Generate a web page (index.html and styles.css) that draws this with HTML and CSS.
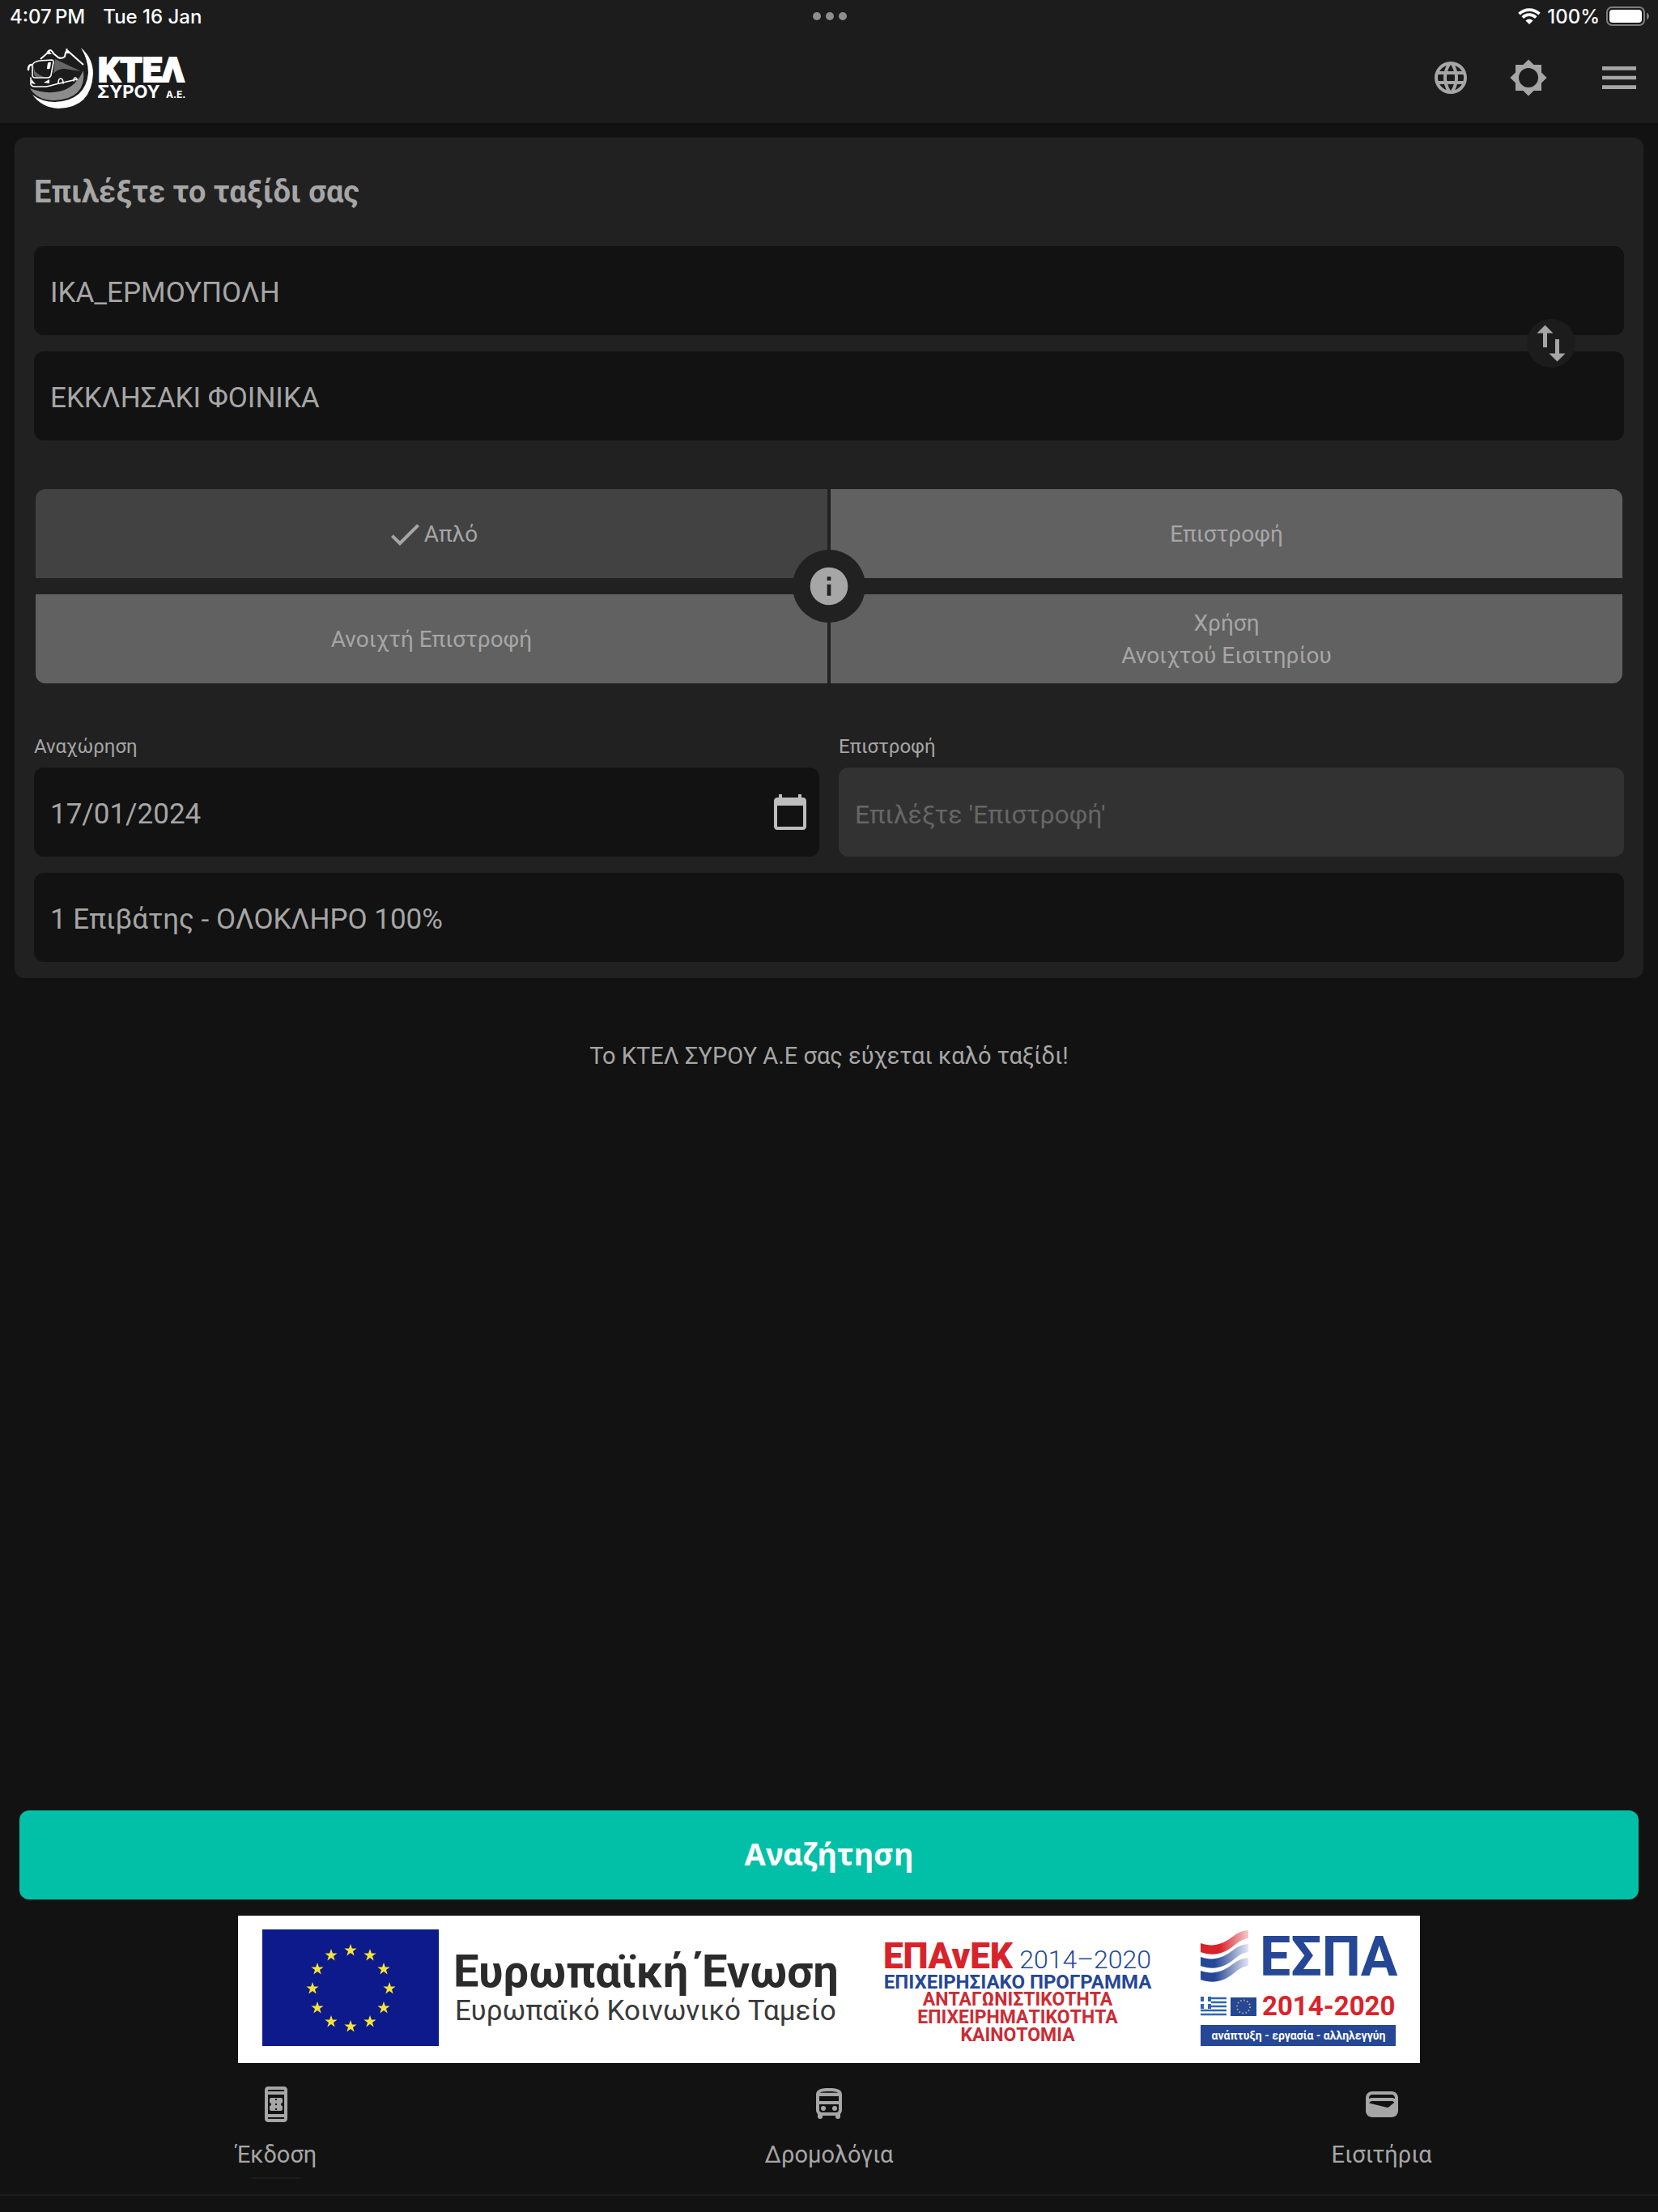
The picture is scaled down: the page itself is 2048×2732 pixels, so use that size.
FILE: index.html
```
<!DOCTYPE html>
<html lang="el">
<head>
  <meta charset="UTF-8">
  <meta name="viewport" content="width=device-width, initial-scale=1">
  <title>ΚΤΕΛ Σύρου Α.Ε.</title>
  <link rel="stylesheet" href="styles.css">
</head>
<body>

  <header class="top">
    <div class="status">
      <div class="status-left">
        <span>4:07&thinsp;PM</span>
        <span>Tue 16 Jan</span>
      </div>
      <svg class="dots" viewBox="0 0 44 12">
        <circle cx="6" cy="6" r="5"/><circle cx="22" cy="6" r="5"/><circle cx="38" cy="6" r="5"/>
      </svg>
      <div class="status-right">
        <svg class="wifi" viewBox="0 0 28 20">
          <path d="M14 20l-4.600-4.600a6.500 6.500 0 0 1 9.200 0z" fill="#fff"/>
          <path d="M5.800 11.600a11.600 11.600 0 0 1 16.400 0M1.500 7.200a17.700 17.700 0 0 1 25 0" fill="none" stroke="#fff" stroke-width="3.800"/>
        </svg>
        <span>100%</span>
        <svg class="battery" viewBox="0 0 54 24">
          <rect x="1" y="1" width="46" height="22" rx="6" fill="none" stroke="#7d7d7d" stroke-width="2"/>
          <rect x="4" y="4" width="40" height="16" rx="4" fill="#fff"/>
          <path d="M50 7.500v9c4-2 4-7 0-9z" fill="#7d7d7d"/>
        </svg>
      </div>
    </div>

    <div class="toolbar">
      <a class="logo" href="#" aria-label="ΚΤΕΛ Σύρου">
        <svg viewBox="0 0 196 76">
          <!-- churches on the hills -->
          <path d="M14 15l8-7q2-4 4-4 2 0 4 4l6 5q4 2 8-1l1-5q2-4 4-1l18 16" fill="none" stroke="#fff" stroke-width="2"/>
          <path d="M24.500 4v4M46.500 2v5" stroke="#fff" stroke-width="2"/>
          <path d="M21 9l3.500-4L28 9zM44 8l2.500-4L50 8z" fill="#fff"/>
          <!-- bus -->
          <path d="M32 15l32 15-20-3q-8-1-14 6zM5 21l2 9q5 5 11 7h-8q-4 0-4-4z" fill="#666"/>
          <g fill="none" stroke="#fff" stroke-width="1.600" stroke-linecap="round">
            <path d="M4 22q2-4 9-5l15-1q2 0 2 3l-3 16q-1 3-4 3H7q-3 0-3-4z"/>
            <path d="M3 22q-4 0-4 6" stroke-width="2.500"/>
            <path d="M2 38v8q1 3 5 3h14q5-1 12-3l26-6"/>
            <path d="M36 45q0-6 3-6t3 6M55 42q0-4 2-4t2 3"/>
          </g>
          <path d="M22 26l1-6q1-2 4-1l-1 7q-1 2-4 1zM3 40l5 6-5-1zM18 44l7-4v5z" fill="#fff"/>
          <path d="M1 51q14 6 28 5 26-1 38-27 4 35-36 37-21 0-30-15z" fill="#8c8c8c"/>
          <path d="M64 1q15 13 15 32-2 42-43 43Q16 75 4 59q12 9 28 9 38-2 41-36 0-16-9-31z" fill="#fff"/>
          <text x="85" y="43" class="logo-name">ΚΤΕΛ</text>
          <text x="84" y="63" class="logo-place">ΣΥΡΟΥ</text>
          <text x="169" y="63" class="logo-ae">Α.Ε.</text>
        </svg>
      </a>
      <div class="tools">
        <button type="button" aria-label="Γλώσσα">
          <svg class="icon" viewBox="0 0 24 24"><path d="M16.360,14C16.440,13.340 16.500,12.680 16.500,12C16.500,11.320 16.440,10.660 16.360,10H19.740C19.900,10.640 20,11.310 20,12C20,12.690 19.900,13.360 19.740,14M14.590,19.560C15.190,18.450 15.650,17.250 15.970,16H18.920C17.960,17.650 16.430,18.930 14.590,19.560M14.340,14H9.660C9.560,13.340 9.500,12.680 9.500,12C9.500,11.320 9.560,10.650 9.660,10H14.340C14.430,10.650 14.500,11.320 14.500,12C14.500,12.680 14.430,13.340 14.340,14M12,19.960C11.170,18.760 10.500,17.430 10.090,16H13.910C13.500,17.430 12.830,18.760 12,19.960M8,8H5.080C6.030,6.340 7.570,5.060 9.400,4.440C8.800,5.550 8.350,6.750 8,8M5.080,16H8C8.350,17.250 8.800,18.450 9.400,19.560C7.570,18.930 6.030,17.650 5.080,16M4.260,14C4.100,13.360 4,12.690 4,12C4,11.310 4.100,10.640 4.260,10H7.640C7.560,10.660 7.500,11.320 7.500,12C7.500,12.680 7.560,13.340 7.640,14M12,4.030C12.830,5.230 13.500,6.570 13.910,8H10.090C10.500,6.570 11.170,5.230 12,4.030M18.920,8H15.970C15.650,6.750 15.190,5.550 14.590,4.440C16.430,5.070 17.960,6.340 18.920,8M12,2C6.470,2 2,6.500 2,12A10,10 0 0,0 12,22A10,10 0 0,0 22,12A10,10 0 0,0 12,2Z"/></svg>
        </button>
        <button type="button" aria-label="Θέμα">
          <svg class="icon" viewBox="0 0 24 24"><path d="M12,18A6,6 0 0,1 6,12A6,6 0 0,1 12,6A6,6 0 0,1 18,12A6,6 0 0,1 12,18M20,15.310L23.310,12L20,8.690V4H15.310L12,0.690L8.690,4H4V8.690L0.690,12L4,15.310V20H8.690L12,23.310L15.310,20H20V15.310Z"/></svg>
        </button>
        <button type="button" class="menu" aria-label="Μενού">
          <svg class="icon-lg" viewBox="0 0 24 24"><path d="M3,6H21V8H3V6M3,11H21V13H3V11M3,16H21V18H3V16Z"/></svg>
        </button>
      </div>
    </div>
  </header>

  <main>
    <form class="card" id="searchForm">
      <h1>Επιλέξτε το ταξίδι σας</h1>

      <div class="stations">
        <input class="field" type="text" aria-label="Από" value="ΙΚΑ_ΕΡΜΟΥΠΟΛΗ">
        <input class="field" type="text" aria-label="Προς" value="ΕΚΚΛΗΣΑΚΙ ΦΟΙΝΙΚΑ">
        <button type="button" class="swap" aria-label="Αντιστροφή">
          <svg viewBox="0 0 24 24"><path d="M9,3L5,7H8V14H10V7H13M16,17V10H14V17H11L15,21L19,17H16Z"/></svg>
        </button>
      </div>

      <div class="types">
        <button type="button" class="type active" aria-pressed="true">
          <svg class="icon" viewBox="0 0 24 24"><path d="M21,7L9,19L3.500,13.500L4.910,12.090L9,16.170L19.590,5.590L21,7Z"/></svg>
          <span>Απλό</span>
        </button>
        <button type="button" class="type">Επιστροφή</button>
        <button type="button" class="type">Ανοιχτή Επιστροφή</button>
        <button type="button" class="type">Χρήση<br>Ανοιχτού Εισιτηρίου</button>
        <button type="button" class="info" aria-label="Πληροφορίες">
          <svg class="icon-lg" viewBox="0 0 24 24"><path d="M13,9H11V7H13M13,17H11V11H13M12,2A10,10 0 0,0 2,12A10,10 0 0,0 12,22A10,10 0 0,0 22,12A10,10 0 0,0 12,2Z"/></svg>
        </button>
      </div>

      <div class="dates">
        <div class="date">
          <label for="departure">Αναχώρηση</label>
          <div class="date-box">
            <input class="field" type="text" id="departure" value="17/01/2024">
            <svg class="icon calendar" viewBox="0 0 24 24"><path d="M20 3h-1V1h-2v2H7V1H5v2H4c-1.100 0-2 .9-2 2v16c0 1.100.9 2 2 2h16c1.100 0 2-.9 2-2V5c0-1.100-.9-2-2-2zm0 18H4V8h16v13z"/></svg>
          </div>
        </div>
        <div class="date">
          <label for="return">Επιστροφή</label>
          <input class="field" type="text" id="return" placeholder="Επιλέξτε 'Επιστροφή'" disabled>
        </div>
      </div>

      <input class="field" type="text" aria-label="Επιβάτες" value="1 Επιβάτης - ΟΛΟΚΛΗΡΟ 100%">
    </form>

    <p class="wish">Το ΚΤΕΛ ΣΥΡΟΥ Α.Ε σας εύχεται καλό ταξίδι!</p>
  </main>

  <footer>
    <button type="submit" form="searchForm" class="search">Αναζήτηση</button>

    <svg class="banner" viewBox="0 0 1460 182">
      <defs>
        <path id="star" d="M0-8L1.900-2.500H7.600L3 .9 4.700 6.500 0 3.100-4.700 6.500-3 .9-7.600-2.500H-1.900z"/>
        <linearGradient id="redWave"><stop offset="0.400" stop-color="#d9232b"/><stop offset="1" stop-color="#f6c9cc"/></linearGradient>
        <linearGradient id="blueWave"><stop offset="0.300" stop-color="#254796"/><stop offset="1" stop-color="#e4e6f3"/></linearGradient>
      </defs>
      <rect width="1460" height="182" fill="#fff"/>

      <rect x="30" y="17" width="218" height="144" fill="#0d1a8c"/>
      <g fill="#f7e435">
        <use href="#star" x="139" y="43"/><use href="#star" x="163" y="49"/><use href="#star" x="180" y="66"/>
        <use href="#star" x="187" y="90"/><use href="#star" x="180" y="114"/><use href="#star" x="163" y="131"/>
        <use href="#star" x="139" y="137"/><use href="#star" x="115" y="131"/><use href="#star" x="98" y="114"/>
        <use href="#star" x="92" y="90"/><use href="#star" x="98" y="66"/><use href="#star" x="115" y="49"/>
      </g>
      <text x="266" y="88" class="eu-title">Ευρωπαϊκή Ένωση</text>
      <text x="268" y="129" class="eu-sub">Ευρωπαϊκό Κοινωνικό Ταμείο</text>

      <text x="797" y="65" class="epanek">ΕΠΑνΕΚ</text>
      <text x="1128" y="65" class="epanek-year">2014–2020</text>
      <g class="epanek-lines">
        <text x="963" y="90" class="blue">ΕΠΙΧΕΙΡΗΣΙΑΚΟ ΠΡΟΓΡΑΜΜΑ</text>
        <text x="963" y="111">ΑΝΤΑΓΩΝΙΣΤΙΚΟΤΗΤΑ</text>
        <text x="963" y="133">ΕΠΙΧΕΙΡΗΜΑΤΙΚΟΤΗΤΑ</text>
        <text x="963" y="155">ΚΑΙΝΟΤΟΜΙΑ</text>
      </g>

      <!-- waves fade out to the right -->
      <path d="M1189 34c14 5 26 2 38-7 8-6 14-9 21-9v10c-8 1-13 5-19 10-13 10-25 12-40 7z" fill="url(#redWave)"/>
      <path d="M1189 51c14 5 26 2 38-7 8-6 14-9 21-9v10c-8 1-13 5-19 10-13 10-25 12-40 7z" fill="url(#blueWave)"/>
      <path d="M1189 68c14 5 26 2 38-7 8-6 14-9 21-9v10c-8 1-13 5-19 10-13 10-25 12-40 7z" fill="url(#blueWave)"/>
      <text x="1262" y="74" class="espa">ΕΣΠΑ</text>
      <text x="1265" y="123" class="espa-year">2014-2020</text>
      <g stroke="#2f64b5" stroke-width="2.500">
        <path d="M1202 102h19M1202 107h19M1202 112h19M1189 117h32M1189 122h32"/>
        <path d="M1189 103h4M1198 103h4M1189 112h4M1198 112h4" stroke-width="6"/>
      </g>
      <rect x="1226" y="101" width="32" height="23" fill="#254796"/>
      <circle cx="1242" cy="112.500" r="8" fill="none" stroke="#b9b56a" stroke-width="2" stroke-dasharray="1.500 2.690"/>
      <rect x="1189" y="135" width="241" height="26" fill="#254796"/>
      <text x="1310" y="153" class="espa-motto">ανάπτυξη - εργασία - αλληλεγγύη</text>
    </svg>

    <nav class="tabs">
      <a href="#" class="tab current">
        <svg class="icon" viewBox="0 0 24 24"><path d="M17 1H7c-1.100 0-2 .9-2 2v18c0 1.100.9 2 2 2h10c1.100 0 2-.9 2-2V3c0-1.100-.9-2-2-2zM7 4V3h10v1H7zm0 14V6h10v12H7zm0 3v-1h10v1H7zm9-10V9c0-.55-.45-1-1-1H9c-.55 0-1 .45-1 1v2c.55 0 1 .45 1 1s-.45 1-1 1v2c0 .55.45 1 1 1h6c.55 0 1-.45 1-1v-2c-.55 0-1-.45-1-1s.45-1 1-1zm-3.500 4.500h-1v-1h1v1zm0-3h-1v-1h1v1zm0-3h-1v-1h1v1z"/></svg>
        <span>Έκδοση</span>
      </a>
      <a href="#" class="tab">
        <svg class="icon" viewBox="0 0 24 24"><path fill-rule="evenodd" d="M12 2C8 2 4 2.500 4 6v9.500c0 .95.38 1.810 1 2.440v1.810C5 20.440 5.560 21 6.250 21h.5C7.440 21 8 20.440 8 19.750V19h8v.75c0 .69.56 1.250 1.250 1.250h.5c.69 0 1.250-.56 1.250-1.250v-1.810c.62-.63 1-1.490 1-2.440V6c0-3.500-3.580-4-8-4zM6.400 4.900C7.200 4.300 9 4 12 4s4.800.3 5.600.9zM6 7h12v3H6zM6 12h12v3.500c0 .8-.7 1.500-1.500 1.500h-9C6.700 17 6 16.300 6 15.500z"/><circle cx="8.500" cy="14.500" r="1.500"/><circle cx="15.500" cy="14.500" r="1.500"/></svg>
        <span>Δρομολόγια</span>
      </a>
      <a href="#" class="tab">
        <svg class="icon" viewBox="0 0 24 24"><path d="M18 4H6C3.790 4 2 5.790 2 8v8c0 2.210 1.790 4 4 4h12c2.210 0 4-1.790 4-4V8c0-2.210-1.790-4-4-4zm-1.860 9.770c-.24.2-.57.28-.88.2L4.150 11.250C4.450 10.520 5.160 10 6 10h12c.67 0 1.260.34 1.630.84l-3.490 2.930zM6 6h12c1.100 0 2 .9 2 2v.55C19.410 8.210 18.730 8 18 8H6c-.73 0-1.410.21-2 .55V8c0-1.100.9-2 2-2z"/></svg>
        <span>Εισιτήρια</span>
      </a>
    </nav>
  </footer>

</body>
</html>
```
FILE: styles.css
```
* {
  box-sizing: border-box;
}
body {
  margin: 0;
  min-height: 100vh;
  display: flex;
  flex-direction: column;
  background: #121212;
  color: #a6a6a6;
  font-family: Roboto, "Noto Sans", sans-serif;
  font-size: 28px;
}
button, input {
  font: inherit;
  color: inherit;
  border: 0;
  margin: 0;
  padding: 0;
}
button {
  background: none;
  cursor: pointer;
}
svg {
  display: block;
  fill: currentColor;
}
.icon {
  width: 48px;
  height: 48px;
}
.icon-lg {
  width: 56px;
  height: 56px;
}

/* header */
.top {
  background: #1c1c1c;
}
.status {
  display: grid;
  grid-template-columns: 1fr auto 1fr;
  align-items: center;
  height: 40px;
  padding: 0 10px 0 12px;
  color: #fff;
  font-family: Inter, sans-serif;
  font-size: 24px;
  font-weight: 500;
}
.status-left, .status-right {
  display: flex;
  align-items: center;
}
.status-left {
  gap: 22px;
}
.status-right {
  gap: 8px;
  justify-content: flex-end;
}
.dots {
  width: 44px;
  height: 12px;
  fill: #8e8e8e;
}
.wifi {
  width: 28px;
  height: 20px;
}
.battery {
  width: 54px;
  height: 24px;
}
.toolbar {
  display: flex;
  justify-content: space-between;
  align-items: center;
  height: 112px;
  padding: 0 20px 0 36px;
}
.logo svg {
  width: 196px;
  height: 76px;
  overflow: visible;
}
.logo text {
  fill: #fff;
  font-family: Inter, sans-serif;
  font-weight: 700;
}
.logo .logo-name {
  font-family: Roboto, sans-serif;
  font-size: 43px;
  font-weight: 900;
  stroke: #fff;
  stroke-width: 2px;
}
.logo .logo-place {
  font-size: 22px;
}
.logo .logo-ae {
  font-size: 12px;
}
.tools {
  display: flex;
  align-items: center;
  gap: 48px;
}
.menu {
  margin-left: 12px;
}

/* search card */
main {
  flex: 1;
}
.card {
  margin: 18px 18px 0;
  padding: 44px 24px 20px;
  border-radius: 12px;
  background: #212121;
}
h1 {
  margin: 0 0 44px;
  font-size: 38px;
  line-height: 46px;
  font-weight: 700;
}
.field {
  display: block;
  width: 100%;
  height: 110px;
  padding: 4px 20px 0;
  border-radius: 12px;
  background: #121212;
  font-size: 35px;
}
.field:disabled {
  background: #323232;
}
.field::placeholder {
  color: #666;
  font-size: 32px;
}
.stations {
  position: relative;
  display: grid;
  gap: 20px;
}
.swap {
  position: absolute;
  right: 60px;
  top: 50%;
  transform: translateY(-50%);
  width: 60px;
  height: 60px;
  border-radius: 50%;
  background: #1c1c1c;
}
.types {
  position: relative;
  display: grid;
  grid-template-columns: 1fr 1fr;
  gap: 20px 4px;
  margin: 60px 2px;
  border-radius: 12px;
  overflow: hidden;
}
.type {
  display: flex;
  justify-content: center;
  align-items: center;
  height: 110px;
  padding-top: 2px;
  background: #616161;
  line-height: 40px;
}
.type.active {
  background: #424242;
}
.info {
  position: absolute;
  left: 50%;
  top: 50%;
  transform: translate(-50%, -50%);
  display: grid;
  place-items: center;
  width: 90px;
  height: 90px;
  border-radius: 50%;
  background: #212121;
}
.dates {
  display: grid;
  grid-template-columns: 1fr 1fr;
  gap: 24px;
  margin-bottom: 20px;
}
.date label {
  display: block;
  height: 44px;
  font-size: 24px;
  line-height: 36px;
}
.date-box {
  position: relative;
}
.calendar {
  position: absolute;
  right: 12px;
  top: 31px;
  color: #bdbdbd;
}
.wish {
  margin: 76px 0 0;
  text-align: center;
  font-size: 29px;
  line-height: 40px;
}

/* bottom */
.search {
  display: block;
  width: calc(100% - 48px);
  height: 110px;
  margin: 0 24px 20px;
  padding-bottom: 4px;
  border-radius: 12px;
  background: #02c0a8;
  color: #fff;
  font-family: "Noto Sans", sans-serif;
  font-size: 38px;
  font-weight: 700;
}
.banner {
  width: 1460px;
  max-width: 100%;
  margin: 0 auto;
}
.banner text {
  font-family: Roboto, sans-serif;
}
.banner .eu-title {
  font-size: 56px;
  font-weight: 700;
  fill: #2b2b2b;
}
.banner .eu-sub {
  font-size: 35px;
  fill: #3a3a3a;
}
.banner .epanek {
  font-size: 44px;
  font-weight: 900;
  fill: #d9232b;
}
.banner .epanek-year {
  font-size: 32px;
  font-weight: 300;
  text-anchor: end;
  fill: #254796;
}
.epanek-lines {
  fill: #cc2b33;
  font-size: 23px;
  font-weight: 700;
  text-anchor: middle;
}
.epanek-lines .blue {
  font-size: 24px;
  fill: #254796;
}
.banner .espa {
  font-size: 68px;
  font-weight: 700;
  fill: #254796;
}
.banner .espa-year {
  font-size: 33px;
  font-weight: 700;
  fill: #d9232b;
}
.banner .espa-motto {
  font-size: 14px;
  font-weight: 700;
  text-anchor: middle;
  fill: #fff;
}
.tabs {
  display: grid;
  grid-template-columns: repeat(3, 1fr);
  margin-bottom: 20px;
  border-bottom: 2px solid #1c1c1c;
}
.tab {
  display: flex;
  flex-direction: column;
  align-items: center;
  gap: 18px;
  height: 162px;
  padding-top: 27px;
  color: inherit;
  text-decoration: none;
  font-size: 29px;
  line-height: 40px;
}
.tab.current::after {
  content: "";
  width: 60px;
  height: 2px;
  margin-top: -10px;
  background: #1c1c1c;
}
```
